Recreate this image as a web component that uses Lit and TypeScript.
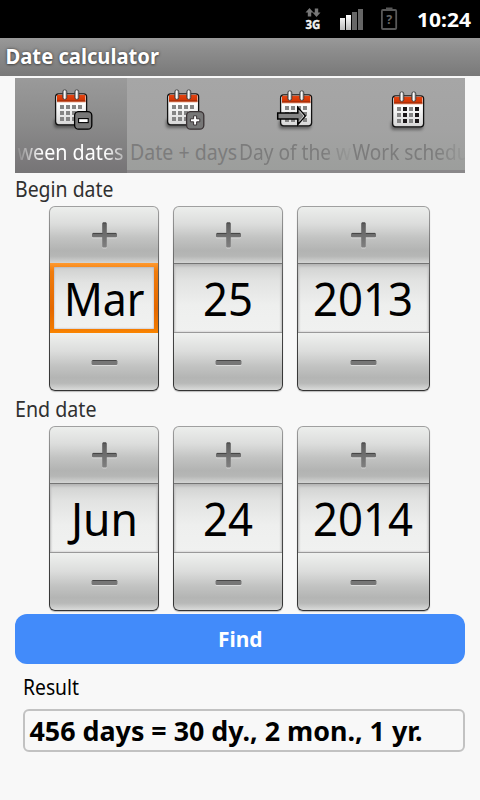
import { LitElement, html, svg, css, nothing } from "lit";
import { customElement, property } from "lit/decorators.js";

/** One line of text condensed to a fixed advance width. */
@customElement("fit-text")
class FitText extends LitElement {
  @property() text = "";
  @property({ type: Number }) width = 100;
  @property({ type: Number }) height = 30;
  @property({ type: Number }) x = 0;
  @property({ type: Number }) baseline = 20;
  @property({ type: Number }) length = 50;
  static styles = css`
    :host { display: block; font-family: "Noto Sans", "Open Sans", sans-serif; }
    svg { display: block; overflow: hidden; }
    text { fill: currentColor; white-space: pre; }
  `;
  render() {
    return html`<svg width=${this.width} height=${this.height}>
      <text x=${this.x} y=${this.baseline} textLength=${this.length} lengthAdjust="spacingAndGlyphs">${this.text}</text>
    </svg>`;
  }
}

type Kind = "minus" | "plus" | "arrow" | "work";

/** Calendar glyph with an optional badge; drawn on a 48 x 48 canvas. */
@customElement("calendar-icon")
class CalendarIcon extends LitElement {
  @property() kind: Kind = "minus";
  static styles = css`
    :host { display: block; }
    svg { display: block; overflow: visible; }
    .shadow { fill: #000; opacity: 0.4; filter: blur(1.6px); }
  `;
  private badge() {
    if (this.kind === "arrow")
      return svg`<path d="M1.7 24.6H21.800V19L29.300 27.5L21.800 36V30.4H1.7Z" transform="translate(0 -.5)" fill="#858585" stroke="#000" stroke-width="1.500"/>
        <path d="M23.200 21.500L28 27L23.200 32.500" fill="none" stroke="#ddd" stroke-width=".9"/>`;
    if (this.kind === "work") return nothing;
    const edge = this.kind === "minus" ? "#000" : "#3b3335";
    return svg`<rect x="23.6" y="23.6" width="17.2" height="17.6" rx="4" fill="#777" stroke=${edge} stroke-width="1.3"/>
      ${this.kind === "minus"
        ? svg`<rect x="27.6" y="30.6" width="9.6" height="4" fill="#fff" stroke="#000" stroke-width="1.1"/>`
        : svg`<path d="M30.6 27.8h3v3h3.2v3h-3.2v3.2h-3v-3.2h-3.2v-3h3.2z" fill="#fff" stroke="#3b3335" stroke-width="1"/>`}`;
  }
  render() {
    const cells = [];
    for (let r = 0; r < 3; r++)
      for (let c = 0; c < 4; c++)
        cells.push(svg`<rect x=${9 + c * 6} y=${17 + r * 6} width="4" height="4"
          fill=${this.kind === "work" && c % 2 === 1 ? "#1a1618" : "#858585"}/>`);
    return html`<svg width="48" height="48" viewBox="0 0 48 48">
      <defs>
        <linearGradient id="paper" x2="0" y2="1"><stop offset=".3" stop-color="#fff"/><stop offset="1" stop-color="#d6d6d6"/></linearGradient>
        <linearGradient id="red" x2="0" y2="1"><stop stop-color="#e64410"/><stop offset="1" stop-color="#c93000"/></linearGradient>
        <linearGradient id="ring"><stop stop-color="#888"/><stop offset=".4" stop-color="#fff"/><stop offset="1" stop-color="#999"/></linearGradient>
      </defs>
      <rect class="shadow" x="3" y="31" width="32" height="9" rx="3"/>
      <rect x="4.6" y="5.8" width="31" height="31" rx="3" fill="url(#paper)" stroke="#111" stroke-width="1.3"/>
      <path d="M6 6.800H34.4V14H6Z" fill="url(#red)"/>
      <path d="M6 13H34.4" stroke="#7d2a10" stroke-width=".8"/>
      <path d="M6 14H34.4" stroke="#e8a48c" stroke-width=".8"/>
      ${[12, 24].map((x) => svg`<rect x=${x - 0.2} y="1.8" width="4" height="9.6" rx="2" fill="url(#ring)" stroke="#333" stroke-width=".8"/>`)}
      ${cells}${this.badge()}
    </svg>`;
  }
}

@customElement("number-picker")
class NumberPicker extends LitElement {
  @property() value = "";
  @property({ type: Number }) width = 110;
  @property({ type: Number }) x = 10;
  @property({ type: Number }) length = 90;
  @property({ type: Boolean, reflect: true }) focused = false;
  static styles = css`
    :host { display: block; }
    .frame {
      box-sizing: border-box; height: 185px; padding: 1px; border-radius: 6px;
      background: linear-gradient(#a0a0a0, #555 40%, #333);
      box-shadow: 0 1px 1px #bbb;
      display: flex; flex-direction: column;
    }
    .key { display: flex; justify-content: center; align-items: center; }
    .key svg { display: block; margin-top: 1px; }
    .up {
      height: 56px; border-radius: 5px 5px 0 0;
      background: linear-gradient(#eceeec, #dcdddc 30%, #c2c3c2 55%, #b2b3b2 78%, #b6b7b6 88%, #d4d5d4);
    }
    .down {
      height: 57px; border-radius: 0 0 5px 5px;
      background: linear-gradient(#eff1ef, #dcdddc 32%, #c2c3c2 58%, #b4b5b4 78%, #b8b9b8 88%, #dadbda);
    }
    .value {
      box-sizing: border-box; height: 70px; color: #000;
      border-top: 1px solid #747474; border-bottom: 1px solid #999;
      background: linear-gradient(#cfd0cf, #e2e3e2 25%, #eeefee 60%, #f0f1f0);
      box-shadow: inset 0 2px 3px #b4b4b4, inset 1px 0 2px #ccc, inset -1px 0 2px #ccc;
      overflow: hidden; font-size: 45px; font-family: "Noto Sans", sans-serif;
    }
    .value fit-text { margin-top: -1px; }
    :host([focused]) .value {
      border: 4px solid; border-image: linear-gradient(#ff9a30, #f07c0c 12%, #e46800 65%, #f07800 92%, #fa8600) 4;
      box-shadow: inset 0 0 2px #99a;
    }
    :host([focused]) .value fit-text { margin: -4px 0 0 -4px; }
  `;
  render() {
    return html`<div class="frame" style="width:${this.width}px">
      <div class="key up"><svg width="29" height="29" viewBox="0 0 29 29">
        <defs><linearGradient id="g" x2="0" y2="1"><stop stop-color="#5c5c5c"/><stop offset="1" stop-color="#808080"/></linearGradient></defs>
        <path d="M13.2 2h2.6q1 0 1 1v9.4h9.2q1 0 1 1v2.4q0 1-1 1h-9.2V26q0 1-1 1h-2.6q-1 0-1-1v-9.2H3q-1 0-1-1v-2.4q0-1 1-1h9.2V3q0-1 1-1z" transform="translate(0 .6)" fill="#d4d4d4"/>
        <path d="M13.2 1.5h2.6q1 0 1 1v9.4h9.2q1 0 1 1v2.4q0 1-1 1h-9.2V25.5q0 1-1 1h-2.6q-1 0-1-1v-9.2H3q-1 0-1-1v-2.4q0-1 1-1h9.2V2.5q0-1 1-1z" fill="url(#g)"/>
        <path d="M3 12.4h9.5M16.8 12.4H26M13 2h3" stroke="#444" fill="none"/>
      </svg></div>
      <div class="value"><fit-text .text=${this.value} .width=${this.width - 2} .height=${68} .x=${this.x} .baseline=${53} .length=${this.length}></fit-text></div>
      <div class="key down"><svg width="29" height="9" viewBox="0 0 29 9">
        <rect x="1.5" y="3" width="26" height="5" rx="1.5" fill="#dcdcdc"/>
        <rect x="1.5" y="2" width="26" height="5" rx="1.5" fill="#777"/>
        <path d="M2.5 2.5h24" stroke="#484848"/>
      </svg></div>
    </div>`;
  }
}

const TABS: { kind: Kind; text: string; x: number; length: number }[] = [
  { kind: "minus", text: "ween dates", x: 2.5, length: 106 },
  { kind: "plus", text: "Date + days", x: 3, length: 107 },
  { kind: "arrow", text: "Day of the w", x: 0, length: 112 },
  { kind: "work", text: "Work schedu", x: 0.5, length: 116 },
];

@customElement("app-root")
class AppRoot extends LitElement {
  static styles = css`
    :host {
      display: flex; flex-direction: column; width: 480px; height: 800px;
      background: #f8f8f8; overflow: hidden; font-family: "Noto Sans", sans-serif; font-size: 21px; color: #303030;
    }
    .status { height: 38px; background: #000; display: flex; }
    .status svg { display: block; font-family: "Noto Sans", sans-serif; font-weight: 700; }
    .title {
      height: 38px; color: #fff; font-weight: 700; font-size: 20.5px;
      background: linear-gradient(#999, #8c8c8c 35%, #797979);
      text-shadow: 0 0 3px #444, 0 1px 2px #555;
    }
    .tabs {
      margin: 2px 15px 0; height: 95px; display: grid; grid-template-columns: 112px 112px 113px 113px;
      background: #8a888a;
    }
    .tab { height: 92px; background: linear-gradient(#a6a6a6, #a3a3a3 55%, #9c9e9c); color: #7c7c7c; overflow: hidden; }
    .tab.on { height: 95px; background: linear-gradient(#9a9a9a, #8a8a8a 50%, #767476); color: #fff; }
    .tab calendar-icon { margin-left: 36px; padding-top: 10px; }
    .tab.arrow calendar-icon { margin-left: 37px; padding-top: 11px; }
    .tab.work calendar-icon { margin-left: 36px; padding-top: 12px; }
    .caption { display: block; }
    .on .caption { mask-image: linear-gradient(90deg, transparent 0, #000 28px, #000 88px, transparent 125px); }
    .arrow .caption, .work .caption { mask-image: linear-gradient(90deg, #000 84px, transparent 116px); }
    .label { height: 33px; margin-left: 15px; }
    .pickers { display: flex; gap: 14px; margin-left: 49px; height: 185px; }
    .end { height: 35px; }
    .find { margin: 3px 15px 0; height: 50px; border-radius: 12px; background: #428bfa; color: #fff; font-weight: 700; }
    .result { margin-left: 23px; height: 45px; color: #000; }
    .field {
      box-sizing: border-box; margin: 0 15px 0 23px; height: 43px; border: 2px solid #c2c2c2; border-radius: 6px;
      color: #000; font-weight: 700; font-size: 26px;
    }
  `;
  private text(t: string, width: number, height: number, x: number, baseline: number, length: number) {
    return html`<fit-text .text=${t} .width=${width} .height=${height} .x=${x} .baseline=${baseline} .length=${length}></fit-text>`;
  }
  render() {
    return html`
      <div class="status"><svg width="480" height="38" viewBox="0 0 480 38">
        <defs><linearGradient id="sig" x2="0" y2="1"><stop stop-color="#fff"/><stop offset="1" stop-color="#bbb"/></linearGradient></defs>
        <path d="M309.500 8l4 4.500h-2.300V16.500h-3.400V12.500h-2.300zM316.500 17l-4-4.500h2.300v-4h3.400v4h2.300z" fill="#777"/>
        <text x="305.500" y="29" font-size="13" fill="#f2f2f2" stroke="#f2f2f2" stroke-width=".4" textLength="14.800" lengthAdjust="spacingAndGlyphs">3G</text>
        <path d="M340 18h5v12h-5zM346 15h5v15h-5z" fill="url(#sig)"/>
        <path d="M352 12h5v18h-5zM358 9h5v21h-5z" fill="#666"/>
        <rect x="381.900" y="10" width="14.300" height="19" rx="1" fill="none" stroke="#585858" stroke-width="1.800"/>
        <rect x="386" y="7.500" width="6.500" height="2.500" fill="#585858"/>
        <text x="386.300" y="24" font-size="12.500" fill="#666">?</text>
        <text x="417" y="27" font-size="20" fill="#fff" textLength="54" lengthAdjust="spacingAndGlyphs">10:24</text>
      </svg></div>
      <div class="title">${this.text("Date calculator", 480, 38, 5.5, 26, 153.5)}</div>
      <div class="tabs">${TABS.map((t) => html`<div class="tab ${t.kind} ${t.kind === "minus" ? "on" : ""}">
        <calendar-icon .kind=${t.kind}></calendar-icon>
        <div class="caption">${this.text(t.text, 113, 32, t.x, t.kind === "arrow" ? 23 : t.kind === "work" ? 22 : 24, t.length)}</div>
      </div>`)}</div>
      <div class="label">${this.text("Begin date", 300, 33, 0, 24, 98.5)}</div>
      <div class="pickers">
        <number-picker focused .value=${"Mar"} .width=${110} .x=${14} .length=${80.5}></number-picker>
        <number-picker .value=${"25"} .width=${110} .x=${29} .length=${50}></number-picker>
        <number-picker .value=${"2013"} .width=${133} .x=${15} .length=${100}></number-picker>
      </div>
      <div class="label end">${this.text("End date", 300, 35, 0, 26, 81.5)}</div>
      <div class="pickers">
        <number-picker .value=${"Jun"} .width=${110} .x=${21} .length=${67}></number-picker>
        <number-picker .value=${"24"} .width=${110} .x=${29} .length=${50}></number-picker>
        <number-picker .value=${"2014"} .width=${133} .x=${15} .length=${100}></number-picker>
      </div>
      <div class="find">${this.text("Find", 450, 50, 203, 33, 44.5)}</div>
      <div class="result">${this.text("Result", 300, 45, 0, 31, 56)}</div>
      <div class="field">${this.text("456 days = 30 dy., 2 mon., 1 yr.", 438, 39, 4.5, 30, 393)}</div>
    `;
  }
}
